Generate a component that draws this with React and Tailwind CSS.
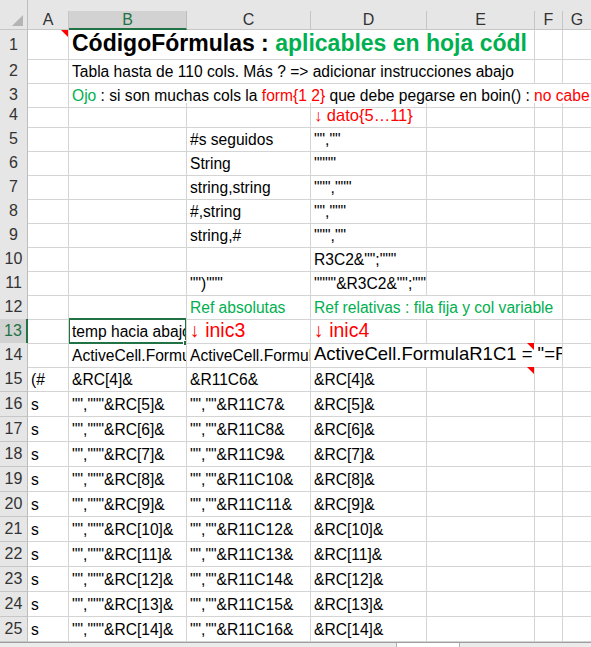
import React from 'react';

const COLS = 'grid grid-cols-[28px_41px_118px_124px_116px_108px_28px_28px]';
const SPAN = { 1: 'col-span-1', 2: 'col-span-2', 3: 'col-span-3', 4: 'col-span-4', 5: 'col-span-5', 6: 'col-span-6' };
const LETTERS = ['A', 'B', 'C', 'D', 'E', 'F', 'G'];

const G = ({ children }) => <span className="text-[#00b050]">{children}</span>;
const R = ({ children }) => <span className="text-[#ff0000]">{children}</span>;

// red comment marker in the top-right corner of a cell
const Note = ({ cls = 'right-0' }) => (
  <span className={`absolute top-0 w-0 h-0 border-l-[7px] border-l-transparent border-t-[7px] border-t-[#ff0000] ${cls}`} />
);

function Cell({ cell, col }) {
  const span = cell?.span || 1;
  const endsAtG = col + span - 1 === 6;
  return (
    <div
      className={`relative flex items-end overflow-x-clip whitespace-nowrap border-b border-[#d4d4d4] px-[3px] pb-[2px] leading-[18px] ${SPAN[span]} ${endsAtG ? '' : 'border-r'} ${cell?.cls || ''}`}
    >
      {cell?.t != null && <span className="whitespace-pre">{cell.t}</span>}
      {cell?.note && <Note cls={cell.noteAt} />}
      {cell?.sel && (
        <span className="absolute -left-[1px] -top-[1px] -right-[1px] -bottom-[1px] border-2 border-[#217346]">
          <span className="absolute -right-[4px] -bottom-[4px] w-[6px] h-[6px] bg-[#217346] border border-white" />
        </span>
      )}
    </div>
  );
}

function Row({ n, h, cells, selected }) {
  const out = [];
  let col = 0;
  while (col < 7) {
    const cell = cells[col];
    out.push(<Cell key={col} cell={cell} col={col} />);
    col += cell?.span || 1;
  }
  return (
    <div className={`${COLS} ${h}`}>
      <div
        className={`flex items-center justify-center border-b border-[#c6c6c6] text-[16px] ${
          selected ? 'bg-[#d2d2d2] text-[#217346] border-r-2 border-r-[#217346]' : 'bg-[#e6e6e6] text-[#333] border-r border-r-[#bdbdbd]'
        }`}
      >
        {n}
      </div>
      {out}
    </div>
  );
}

const rows = [
  {
    n: 1, h: 'h-[29px]',
    cells: [
      { note: true },
      {
        span: 4, cls: 'text-[23px] font-bold leading-[27px] pb-[1px]',
        t: <>CódigoFórmulas : <G>aplicables en hoja códl</G></>,
      },
    ],
  },
  {
    n: 2, h: 'h-[24px]',
    cells: [null, { span: 4, t: 'Tabla hasta de 110 cols. Más ? => adicionar instrucciones abajo' }],
  },
  {
    n: 3, h: 'h-[20px]',
    cells: [
      { cls: 'pb-[1px]' },
      {
        span: 6, cls: 'pb-[1px]',
        t: <><G>Ojo</G> : si son muchas cols la <R>form{'{'}1 2{'}'}</R> que debe pegarse en boin() : <R>no cabe</R></>,
      },
    ],
  },
  { n: 4, cells: [null, null, null, { cls: 'text-[#ff0000] text-[16.5px] leading-[19px] pb-[1px]', t: '↓ dato{5…11}' }] },
  { n: 5, cells: [null, null, { t: '#s seguidos' }, { t: '"",""' }] },
  { n: 6, cells: [null, null, { t: 'String' }, { t: '""""' }] },
  { n: 7, cells: [null, null, { t: 'string,string' }, { t: '""","""' }] },
  { n: 8, cells: [null, null, { t: '#,string' }, { t: '"","""' }] },
  { n: 9, cells: [null, null, { t: 'string,#' }, { t: '""",""' }] },
  { n: 10, cells: [null, null, null, { t: 'R3C2&"";"""' }] },
  { n: 11, cells: [null, null, { t: '"")"""' }, { t: '""""&R3C2&"";"""' }] },
  {
    n: 12,
    cells: [
      null, null,
      { cls: 'text-[#00b050]', t: 'Ref absolutas' },
      { span: 3, cls: 'text-[#00b050]', t: 'Ref relativas : fila fija y col variable' },
    ],
  },
  {
    n: 13, selected: true,
    cells: [
      null,
      { sel: true, t: 'temp hacia abajo' },
      { cls: 'text-[#ff0000] text-[19.5px] leading-[22px] pb-[1px]', t: '↓ inic3' },
      { cls: 'text-[#ff0000] text-[19.5px] leading-[22px] pb-[1px]', t: '↓ inic4' },
    ],
  },
  {
    n: 14,
    cells: [
      null,
      { t: 'ActiveCell.FormulaR1C1 =' },
      { t: 'ActiveCell.FormulaR1C1 =' },
      {
        span: 3, note: true, noteAt: 'right-[28px]',
        cls: 'text-[18.5px] leading-[22px] pb-[1px]', t: 'ActiveCell.FormulaR1C1 = "=R',
      },
    ],
  },
  { n: 15, cells: [{ t: '(#' }, { t: '&RC[4]&' }, { t: '&R11C6&' }, { t: '&RC[4]&' }, { note: true }] },
];

for (let i = 5; i <= 14; i++) {
  rows.push({
    n: i + 11,
    cells: [{ t: 's' }, { t: `"","""&RC[${i}]&` }, { t: `"",""&R11C${i + 2}&` }, { t: `&RC[${i}]&` }],
  });
}
rows.forEach((r) => {
  if (!r.h) r.h = r.n >= 15 ? 'h-[25px]' : 'h-[24px]';
});

export default function App() {
  return (
    <div className="w-[591px] h-[647px] overflow-hidden bg-white text-[15.6px] text-black font-['Liberation_Sans',Arial,sans-serif]">
      {/* column headers */}
      <div className={`${COLS} h-[30px] bg-[#e6e6e6]`}>
        <div className="relative border-r border-[#bdbdbd] border-b border-b-[#c6c6c6]">
          <span className="absolute right-[4px] bottom-[3px] w-0 h-0 border-l-[11px] border-l-transparent border-b-[11px] border-b-[#b4b4b4]" />
        </div>
        {LETTERS.map((l) => (
          <div key={l} className="flex flex-col justify-end">
            <div
              className={`h-[19px] flex items-center justify-center text-[16px] ${
                l === 'B'
                  ? 'bg-[#d2d2d2] text-[#217346] border-b-2 border-[#217346] border-r border-r-[#bdbdbd]'
                  : `text-[#333] border-b border-[#c6c6c6] ${l === 'G' ? '' : 'border-r border-r-[#c6c6c6]'}`
              }`}
            >
              {l}
            </div>
          </div>
        ))}
      </div>

      {rows.map((r) => (
        <Row key={r.n} {...r} />
      ))}

      {/* sheet tab strip */}
      <div className="flex h-[5px] border-t border-[#9e9e9e] bg-[#e6e6e6]">
        <div className="w-[397px] border-r border-[#b0b0b0] bg-[#ececec]" />
        <div className="w-[62px] bg-white" />
        <div className="flex-1 border-l border-[#b0b0b0] bg-[#ececec]" />
      </div>
    </div>
  );
}
